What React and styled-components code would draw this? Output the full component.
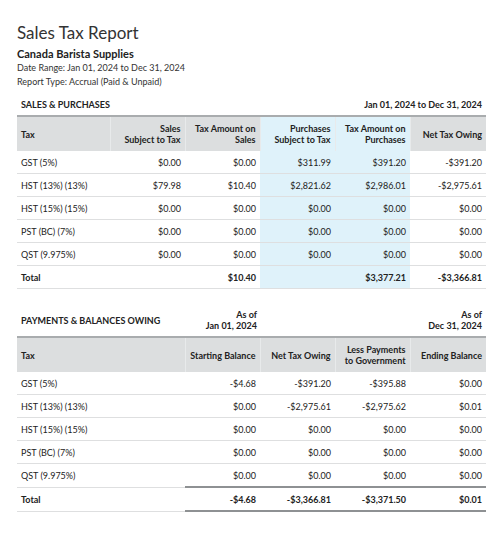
import React from 'react';
import styled, { createGlobalStyle } from 'styled-components';

const Global = createGlobalStyle`
  body { margin: 0; background: #fff; font-family: Lato, "Open Sans", sans-serif; color: #222; }
`;

const Page = styled.div`
  padding: 22px 14px 0 17px;
`;

const Title = styled.h1`
  margin: 0;
  font-size: 17px;
  font-weight: 400;
  line-height: 22px;
  color: #333;
`;

const Company = styled.div`
  font-weight: 700;
  font-size: 11px;
  line-height: 15px;
  margin-top: 2px;
`;

const Meta = styled.div`
  font-size: 9px;
  line-height: 14px;
  color: #333;
`;

const SectionHead = styled.div`
  display: flex;
  justify-content: space-between;
  align-items: flex-end;
  font-size: 9px;
  font-weight: 700;
  line-height: 11px;
  padding: 0 4px 5px 4px;
  margin-top: ${p => p.$top}px;
`;

const Table = styled.table`
  width: 469px;
  border-collapse: collapse;
  table-layout: fixed;
  font-size: 9px;
`;

const Th = styled.th`
  background: #dcdedf;
  border-top: 2px solid #a9acae;
  border-left: ${p => (p.$first ? 'none' : '1px solid #e8eaeb')};
  height: 34px;
  padding: 0 4px;
  text-align: ${p => (p.$left ? 'left' : 'right')};
  font-weight: 700;
  line-height: 11px;
  vertical-align: middle;
`;

const Td = styled.td`
  height: 22px;
  padding: 0 4px;
  border-bottom: 1px solid #dedfe0;
  text-align: ${p => (p.$left ? 'left' : 'right')};
  background: ${p => (p.$blue ? '#dff2fa' : 'transparent')};
  font-weight: ${p => (p.$bold ? 700 : 400)};
  border-top: ${p => (p.$rule ? '2px solid #8e9193' : 'none')};
  ${p => p.$rule && 'border-bottom: 2px solid #8e9193;'}
`;

const Aside = styled.span`
  text-align: right;
`;

const sales = [
  ['GST (5%)', '$0.00', '$0.00', '$311.99', '$391.20', '-$391.20'],
  ['HST (13%) (13%)', '$79.98', '$10.40', '$2,821.62', '$2,986.01', '-$2,975.61'],
  ['HST (15%) (15%)', '$0.00', '$0.00', '$0.00', '$0.00', '$0.00'],
  ['PST (BC) (7%)', '$0.00', '$0.00', '$0.00', '$0.00', '$0.00'],
  ['QST (9.975%)', '$0.00', '$0.00', '$0.00', '$0.00', '$0.00'],
];

const pays = [
  ['GST (5%)', '-$4.68', '-$391.20', '-$395.88', '$0.00'],
  ['HST (13%) (13%)', '$0.00', '-$2,975.61', '-$2,975.62', '$0.01'],
  ['HST (15%) (15%)', '$0.00', '$0.00', '$0.00', '$0.00'],
  ['PST (BC) (7%)', '$0.00', '$0.00', '$0.00', '$0.00'],
  ['QST (9.975%)', '$0.00', '$0.00', '$0.00', '$0.00'],
];

export default function App() {
  return (
    <Page>
      <Global />
      <Title>Sales Tax Report</Title>
      <Company>Canada Barista Supplies</Company>
      <Meta>Date Range: Jan 01, 2024 to Dec 31, 2024</Meta>
      <Meta>Report Type: Accrual (Paid &amp; Unpaid)</Meta>

      <SectionHead $top={10}>
        <span>SALES &amp; PURCHASES</span>
        <span>Jan 01, 2024 to Dec 31, 2024</span>
      </SectionHead>
      <Table>
        <colgroup>
          <col style={{ width: 93 }} />
          <col style={{ width: 75 }} />
          <col style={{ width: 75 }} />
          <col style={{ width: 75 }} />
          <col style={{ width: 75 }} />
          <col style={{ width: 76 }} />
        </colgroup>
        <thead>
          <tr>
            <Th $first $left>Tax</Th>
            <Th>Sales<br />Subject to Tax</Th>
            <Th>Tax Amount on<br />Sales</Th>
            <Th style={{ background: '#dff2fa' }}>Purchases<br />Subject to Tax</Th>
            <Th style={{ background: '#dff2fa' }}>Tax Amount on<br />Purchases</Th>
            <Th>Net Tax Owing</Th>
          </tr>
        </thead>
        <tbody>
          {sales.map(r => (
            <tr key={r[0]}>
              {r.map((c, i) => (
                <Td key={i} $left={i === 0} $blue={i === 3 || i === 4}>{c}</Td>
              ))}
            </tr>
          ))}
          <tr>
            <Td $left $bold>Total</Td>
            <Td />
            <Td $bold>$10.40</Td>
            <Td $blue />
            <Td $blue $bold>$3,377.21</Td>
            <Td $bold>-$3,366.81</Td>
          </tr>
        </tbody>
      </Table>

      <SectionHead $top={20}>
        <span style={{ flex: '0 0 164px', paddingBottom: 5 }}>PAYMENTS &amp; BALANCES OWING</span>
        <Aside style={{ flex: '0 0 76px', marginLeft: -4 }}>As of<br />Jan 01, 2024</Aside>
        <span style={{ flex: 1 }} />
        <Aside>As of<br />Dec 31, 2024</Aside>
      </SectionHead>
      <Table>
        <colgroup>
          <col style={{ width: 168 }} />
          <col style={{ width: 75 }} />
          <col style={{ width: 75 }} />
          <col style={{ width: 75 }} />
          <col style={{ width: 76 }} />
        </colgroup>
        <thead>
          <tr>
            <Th $first $left>Tax</Th>
            <Th>Starting Balance</Th>
            <Th>Net Tax Owing</Th>
            <Th>Less Payments<br />to Government</Th>
            <Th>Ending Balance</Th>
          </tr>
        </thead>
        <tbody>
          {pays.map(r => (
            <tr key={r[0]}>
              {r.map((c, i) => (
                <Td key={i} $left={i === 0}>{c}</Td>
              ))}
            </tr>
          ))}
          <tr>
            <Td $left $bold>Total</Td>
            <Td $bold $rule>-$4.68</Td>
            <Td $bold $rule>-$3,366.81</Td>
            <Td $bold $rule>-$3,371.50</Td>
            <Td $bold $rule>$0.01</Td>
          </tr>
        </tbody>
      </Table>
    </Page>
  );
}
